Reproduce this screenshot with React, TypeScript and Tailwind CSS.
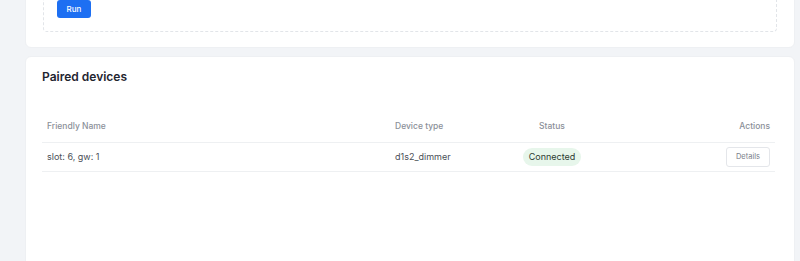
import React from "react";

export default function App() {
  return (
    <div
      className="w-[800px] h-[261px] overflow-hidden bg-[#f2f4f7] pl-[25px] pr-[5px]"
      style={{ fontFamily: "Inter, 'Noto Sans', sans-serif" }}
    >
      <div className="-mt-[40px] bg-white rounded-[6px] px-[17px] pt-[16px] pb-[15px] border border-[#eef0f3]">
        <div className="flex border border-dashed border-[#e2e5e9] rounded-[4px] pl-[13px] pt-[22px] pb-[13px]">
          <button className="h-[18px] w-[34px] rounded-[3px] bg-[#1d6ff2] text-white text-[8px] leading-[18px] font-medium">
            Run
          </button>
        </div>
      </div>
      <div className="mt-[8px] bg-white rounded-t-[6px] border border-[#eef0f3] px-[16px] pt-[11px] h-[220px]">
        <h2 className="text-[12px] leading-[18px] font-semibold text-[#1f2530]">Paired devices</h2>
        <table className="mt-[26px] w-[733px] border-collapse text-left">
          <thead>
            <tr className="border-b border-[#eef0f2] h-[30px] text-[8.5px] font-medium text-[#8b9099]">
              <th className="w-[348px] pl-[5px] font-medium">Friendly Name</th>
              <th className="w-[118px] pl-[5px] font-medium">Device type</th>
              <th className="w-[88px] text-center font-medium">Status</th>
              <th className="pr-[5px] text-right font-medium">Actions</th>
            </tr>
          </thead>
          <tbody>
            <tr className="border-b border-[#eef0f2] h-[29px] text-[9px] text-[#4a4f57]">
              <td className="pl-[5px]">slot: 6, gw: 1</td>
              <td className="pl-[5px]">d1s2_dimmer</td>
              <td className="text-center">
                <span className="inline-flex items-center justify-center h-[18px] w-[58px] rounded-full bg-[#e7f6eb] text-[9px] text-[#2c3a31]">
                  Connected
                </span>
              </td>
              <td className="pr-[5px] text-right">
                <button className="h-[20px] w-[44px] rounded-[3px] border border-[#e4e6ea] bg-white text-[7.5px] text-[#7a808a]">
                  Details
                </button>
              </td>
            </tr>
          </tbody>
        </table>
      </div>
    </div>
  );
}
